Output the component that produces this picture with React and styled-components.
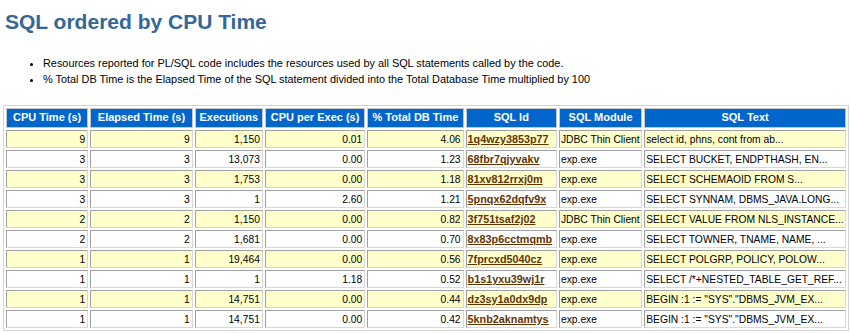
import styled, { createGlobalStyle } from 'styled-components'

const GlobalStyle = createGlobalStyle`
  body {
    margin: 0;
    background: #ffffff;
    font-family: Arial, "Liberation Sans", Helvetica, sans-serif;
  }
`

const rows = [
  ['9', '9', '1,150', '0.01', '4.06', '1q4wzy3853p77', 'JDBC Thin Client', 'select id, phns, cont from ab...'],
  ['3', '3', '13,073', '0.00', '1.23', '68fbr7qjyvakv', 'exp.exe', 'SELECT BUCKET, ENDPTHASH, EN...'],
  ['3', '3', '1,753', '0.00', '1.18', '81xv812rrxj0m', 'exp.exe', 'SELECT SCHEMAOID FROM S...'],
  ['3', '3', '1', '2.60', '1.21', '5pnqx62dqfv9x', 'exp.exe', 'SELECT SYNNAM, DBMS_JAVA.LONG...'],
  ['2', '2', '1,150', '0.00', '0.82', '3f751tsaf2j02', 'JDBC Thin Client', 'SELECT VALUE FROM NLS_INSTANCE...'],
  ['2', '2', '1,681', '0.00', '0.70', '8x83p6cctmqmb', 'exp.exe', 'SELECT TOWNER, TNAME, NAME, ...'],
  ['1', '1', '19,464', '0.00', '0.56', '7fprcxd5040cz', 'exp.exe', 'SELECT POLGRP, POLICY, POLOW...'],
  ['1', '1', '1', '1.18', '0.52', 'b1s1yxu39wj1r', 'exp.exe', 'SELECT /*+NESTED_TABLE_GET_REF...'],
  ['1', '1', '14,751', '0.00', '0.44', 'dz3sy1a0dx9dp', 'exp.exe', 'BEGIN :1 := "SYS"."DBMS_JVM_EX...'],
  ['1', '1', '14,751', '0.00', '0.42', '5knb2aknamtys', 'exp.exe', 'BEGIN :1 := "SYS"."DBMS_JVM_EX...'],
]

const columns = [
  { title: 'CPU Time (s)', width: 82 },
  { title: 'Elapsed Time (s)', width: 102 },
  { title: 'Executions', width: 68 },
  { title: 'CPU per Exec (s)', width: 100 },
  { title: '% Total DB Time', width: 96 },
  { title: 'SQL Id', width: 91 },
  { title: 'SQL Module', width: 83 },
  { title: 'SQL Text', width: 201 },
]

function App () {
  return (
    <Page>
      <GlobalStyle />
      <Title>SQL ordered by CPU Time</Title>
      <Notes>
        <li>Resources reported for PL/SQL code includes the resources used by all SQL statements called by the code.</li>
        <li>% Total DB Time is the Elapsed Time of the SQL statement divided into the Total Database Time multiplied by 100</li>
      </Notes>
      <Report>
        <colgroup>
          {columns.map(c => <col key={c.title} width={c.width} />)}
        </colgroup>
        <thead>
          <tr>
            {columns.map(c => <Head key={c.title}>{c.title}</Head>)}
          </tr>
        </thead>
        <tbody>
          {rows.map((r, i) => (
            <tr key={r[5]}>
              {r.map((v, j) => (
                <Cell key={j} $shaded={i % 2 === 0} $numeric={j < 5}>
                  {j === 5 ? <SqlLink href='#'>{v}</SqlLink> : v}
                </Cell>
              ))}
            </tr>
          ))}
        </tbody>
      </Report>
    </Page>
  )
}

export default App

const Page = styled.div`
  padding: 0 3px;
  width: 846px;
`

const Title = styled.h2`
  font: bold 21px Arial, "Liberation Sans", Helvetica, sans-serif;
  color: #336699;
  margin: 0;
  padding: 9px 0 0 2px;
  line-height: 26px;
`

const Notes = styled.ul`
  margin: 20px 0 18px;
  padding-left: 40px;
  font: 10.9px Arial, "Liberation Sans", Helvetica, sans-serif;
  color: #000;
  line-height: 16px;
  list-style: disc;
`

const Report = styled.table`
  table-layout: fixed;
  width: 846px;
  border: 1px solid #d4d4d4;
  border-spacing: 2px;
  font: 10.3px Arial, "Liberation Sans", Helvetica, sans-serif;
`

const Head = styled.th`
  font: bold 11px Arial, "Liberation Sans", Helvetica, sans-serif;
  color: #ffffff;
  background: #0066cc;
  height: 16px;
  padding: 0 1px 2px;
  border: 1px solid #c8c8c8;
  white-space: nowrap;
  text-align: center;
`

const Cell = styled.td`
  background: ${p => (p.$shaded ? '#ffffcc' : '#ffffff')};
  color: #000;
  height: 16px;
  padding: 0 2px 0 1px;
  border: 1px solid;
  border-color: #a0a0a0 #d8d8d8 #d8d8d8 #a0a0a0;
  white-space: nowrap;
  overflow: hidden;
  text-align: ${p => (p.$numeric ? 'right' : 'left')};
  vertical-align: middle;
`

const SqlLink = styled.a`
  font: bold 10.8px Arial, "Liberation Sans", Helvetica, sans-serif;
  color: #663300;
  text-decoration: underline;
`
